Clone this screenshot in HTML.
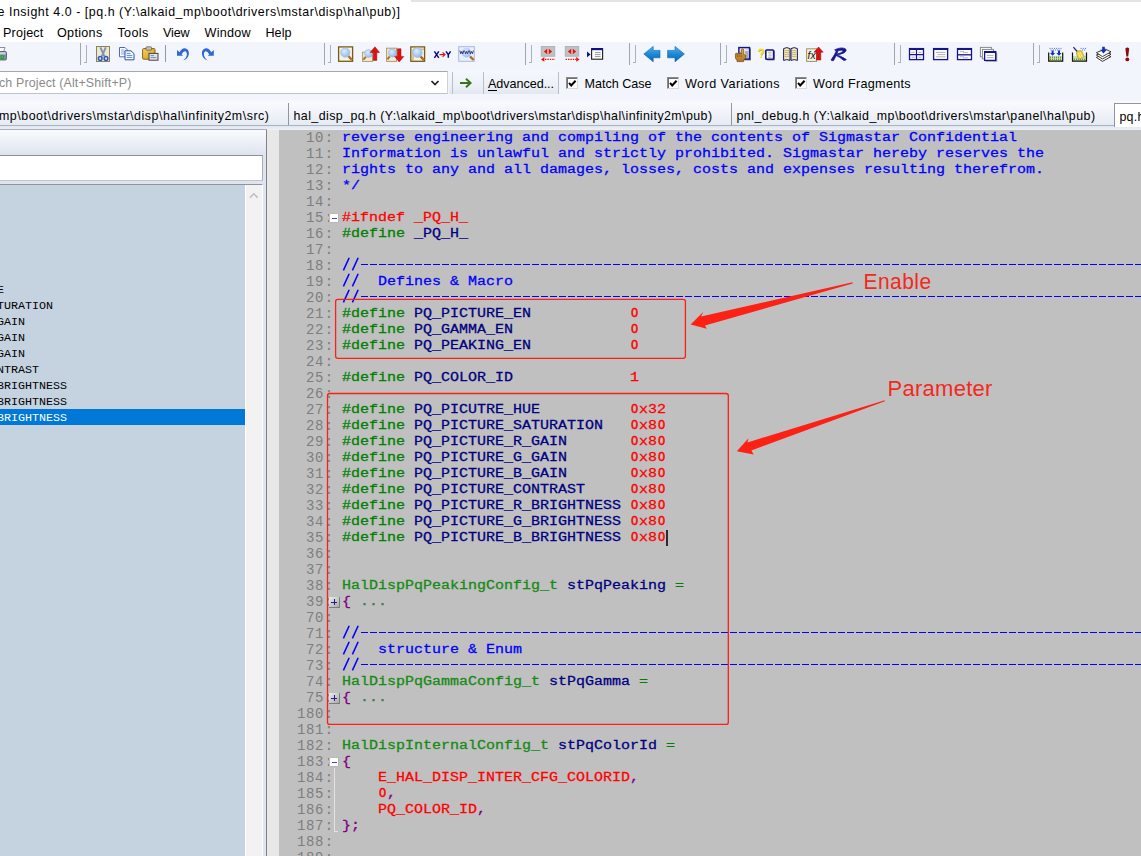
<!DOCTYPE html><html><head><meta charset="utf-8"><title>Source Insight</title><style>
*{box-sizing:border-box;margin:0;padding:0}
html,body{width:1141px;height:856px;overflow:hidden;background:#fff}
body{position:relative;font-family:"Liberation Sans",sans-serif;font-size:12px;color:#000}
.a{position:absolute}
.t{position:absolute;white-space:pre;line-height:16px;height:16px}
.ui{font-family:"Liberation Sans",sans-serif;font-size:12.4px;color:#000}
.code{position:absolute;left:343px;white-space:pre;font-family:"Liberation Mono",monospace;font-weight:normal;font-size:15px;line-height:16px;height:16px;-webkit-text-stroke:0.32px currentColor;transform:scaleY(.87);transform-origin:0 12px}
.ln{position:absolute;left:270px;width:63px;text-align:right;white-space:pre;font-family:"Liberation Mono",monospace;font-size:14px;letter-spacing:0.6px;line-height:16px;height:16px;color:#7e7e7e}
.z{display:inline-block;width:9px;text-align:center;transform:scaleX(.8);-webkit-text-stroke-width:0.6px}
.c{color:#0000ff}.r{color:#ff0000}.g{color:#008000}.n{color:#000080}.p{color:#800080}.ty{color:#158a15}.d{color:#3c7c3c}
.li{position:absolute;left:-94px;white-space:pre;font-family:"Liberation Mono",monospace;font-size:11.67px;line-height:16px;height:16px;color:#000}
.sep{position:absolute;width:1px;background:#a2a6ad}
.grip{position:absolute;width:3px;border:1px solid #aeb2b8;border-left:none;border-top:none}
.fold{position:absolute;width:10px;height:10px;background:#fff;border:1px solid #b8b8b8}
</style></head><body>
<div class="a" style="left:0;top:0;width:1141px;height:24px;background:#fff"></div>
<div class="a" style="left:411px;top:0;width:730px;height:2px;background:#e4e4e4"></div>
<div class="a" style="left:0;top:42px;width:1141px;height:58px;background:#f2f6fc"></div>
<div class="a" style="left:0;top:99px;width:1141px;height:5px;background:linear-gradient(#f1f5fb,#fbfcfe)"></div>
<svg class="a" style="left:0;top:42px" width="1141" height="28" viewBox="0 42 1141 28">
<defs>
<linearGradient id="gb" x1="0" y1="0" x2="0" y2="1"><stop offset="0" stop-color="#4db4f0"/><stop offset=".5" stop-color="#1c8ad6"/><stop offset="1" stop-color="#0b62ae"/></linearGradient>
<radialGradient id="gl" cx=".4" cy=".35" r=".7"><stop offset="0" stop-color="#dcecff"/><stop offset="1" stop-color="#8fb6ea"/></radialGradient>
<linearGradient id="gy" x1="0" y1="0" x2="1" y2="1"><stop offset="0" stop-color="#f6d060"/><stop offset="1" stop-color="#d89818"/></linearGradient>
</defs>
<!-- printer (partial) -->
<path d="M-2 47.5 L5 47.5 L3.5 52 L-2 52 Z" fill="#fff" stroke="#6a7280" stroke-width=".8"/>
<rect x="-3" y="51.5" width="9.5" height="8.5" rx="1.2" fill="#7f8fa6" stroke="#4a5668" stroke-width=".8"/>
<rect x="-2" y="52.2" width="7.6" height="2.2" fill="#c9d3e2"/>
<rect x="1" y="55.8" width="2.6" height="2.6" fill="#22d422" stroke="#0a7a0a" stroke-width=".5"/>
<!-- cut -->
<rect x="96.5" y="46.5" width="13" height="15" fill="#ece8d8" stroke="#8c8450" stroke-width="1"/>
<path d="M100.4 47.4 L104.4 56.4 M105.8 47.4 L101.8 56.4" stroke="#8391a9" stroke-width="1.9" fill="none"/>
<ellipse cx="100.2" cy="58.5" rx="1.8" ry="2" fill="none" stroke="#2f58c4" stroke-width="1.6"/>
<ellipse cx="106" cy="58.5" rx="1.8" ry="2" fill="none" stroke="#2f58c4" stroke-width="1.6"/>
<!-- copy -->
<path d="M119.5 47.5 H125 L127.5 50 V56.8 H119.5 Z" fill="#fff" stroke="#4a6cc0" stroke-width="1"/>
<path d="M121 50 H124.5 M121 52 H126 M121 54 H126" stroke="#6f96e0" stroke-width=".9"/>
<path d="M125 50.8 H131 L134 53.6 V59.8 H125 Z" fill="#fff" stroke="#2b4fa8" stroke-width="1"/>
<path d="M126.6 53.4 H130.5 M126.6 55.4 H132.4 M126.6 57.4 H132.4" stroke="#5b86dc" stroke-width="1"/>
<!-- paste -->
<rect x="142.6" y="48.6" width="12.4" height="10.6" rx="1" fill="url(#gy)" stroke="#8a6210" stroke-width="1"/>
<rect x="146" y="46.8" width="5.6" height="3.4" rx=".8" fill="#c9c2b0" stroke="#6c6250" stroke-width=".8"/>
<rect x="149" y="53.4" width="9" height="6.8" fill="#dbe5f2" stroke="#4a4238" stroke-width="1"/>
<path d="M150.6 55.6 H154 M150.6 57.6 H156.4" stroke="#6d7f9a" stroke-width=".9"/>
<!-- undo -->
<path id="undo" d="M177 50 V55.8 H183 L181.6 54.2 Q183.4 50.8 185.6 51.2 Q187.4 52.6 186.8 55.4 Q186 58.4 183.2 60.6 Q188 58.6 188.8 54.4 Q189.4 49.2 185 48.2 Q181.6 48 179.6 52.2 Z" fill="#2f68d4"/>
<!-- redo -->
<path transform="translate(390.8,0) scale(-1,1)" d="M177 50 V55.8 H183 L181.6 54.2 Q183.4 50.8 185.6 51.2 Q187.4 52.6 186.8 55.4 Q186 58.4 183.2 60.6 Q188 58.6 188.8 54.4 Q189.4 49.2 185 48.2 Q181.6 48 179.6 52.2 Z" fill="#2f68d4"/>
<!-- search 1 -->
<rect x="338.6" y="46.9" width="14" height="14.4" fill="#f6f2e4" stroke="#7a5a12" stroke-width="1.3"/>
<path d="M348.4 56.2 L352 60" stroke="#a8722a" stroke-width="2.4"/>
<circle cx="345.2" cy="52.6" r="4.6" fill="url(#gl)" stroke="#9cbcea" stroke-width=".7"/>
<!-- search up -->
<rect x="362.6" y="52.2" width="10" height="9.2" fill="#f1ecdc" stroke="#b39a5c" stroke-width="1"/>
<path d="M366 56.6 L363.4 59.6" stroke="#a8722a" stroke-width="2"/>
<circle cx="368.6" cy="53.6" r="4" fill="url(#gl)" stroke="#9cbcea" stroke-width=".6"/>
<path d="M374.9 46.8 L379.6 52.4 H376.8 V60.4 H373.2 V52.4 H370.2 Z" fill="#e01010" stroke="#a00808" stroke-width=".5"/>
<!-- search down -->
<rect x="386.6" y="48.2" width="10" height="13.2" fill="#f1ecdc" stroke="#b39a5c" stroke-width="1"/>
<path d="M389.8 56.4 L387.4 59.4" stroke="#a8722a" stroke-width="2"/>
<circle cx="392.4" cy="53" r="4" fill="url(#gl)" stroke="#9cbcea" stroke-width=".6"/>
<path d="M397.4 48.8 H401 V56.4 H403.8 L399.2 62 L394.6 56.4 H397.4 Z" fill="#e01010" stroke="#a00808" stroke-width=".5"/>
<!-- search files -->
<rect x="410.8" y="46.9" width="13.8" height="14.4" fill="#f6f2e4" stroke="#7a5a12" stroke-width="1.3"/>
<path d="M413 61 V49.2 H424.4" fill="none" stroke="#b39a5c" stroke-width="1"/>
<path d="M420.4 56.4 L424 60.2" stroke="#a8722a" stroke-width="2.4"/>
<circle cx="417.4" cy="52.6" r="4.8" fill="url(#gl)" stroke="#9cbcea" stroke-width=".7"/>
<!-- X->Y -->
<path d="M434.4 51.4 L438.8 57.8 M438.8 51.4 L434.4 57.8" stroke="#0a0a8a" stroke-width="1.5"/>
<path d="M439.4 54.6 H444.8 M442.6 52.4 L445 54.6 L442.6 56.8" stroke="#e01010" stroke-width="1.1" fill="none"/>
<path d="M446 51.4 L448.3 54.6 L450.6 51.4 M448.3 54.6 V57.8" stroke="#0a0a8a" stroke-width="1.5" fill="none"/>
<!-- www -->
<rect x="458.7" y="46.7" width="15.6" height="14.6" fill="#e9effc" stroke="#a9b8e4" stroke-width="1"/>
<circle cx="466.4" cy="52.6" r="4.8" fill="url(#gl)" opacity=".9"/>
<path d="M459.8 50.6 L460.8 53.8 L461.8 51.4 L462.8 53.8 L463.8 50.6 M464.6 50.6 L465.6 53.8 L466.6 51.4 L467.6 53.8 L468.6 50.6 M469.4 50.6 L470.4 53.8 L471.4 51.4 L472.4 53.8 L473.4 50.6" fill="none" stroke="#2a2a78" stroke-width=".9"/>
<path d="M470 56.4 L473.6 60" stroke="#a8722a" stroke-width="2.4"/>
<!-- red arrows 1 -->
<rect x="541.3" y="46.6" width="13.4" height="9.6" fill="#c2c2c2" stroke="#b0b0b0" stroke-width="1"/>
<path d="M547.2 48.8 V54.2 L543.8 51.5 Z M548.8 48.8 V54.2 L552.2 51.5 Z" fill="#e81010"/>
<path d="M541 59.4 L544.4 57 V61.8 Z" fill="#e81010"/><path d="M545 59.4 H555" stroke="#e81010" stroke-width="1.4" stroke-dasharray="1.4 1"/>
<!-- red arrows 2 -->
<rect x="565.3" y="46.6" width="13.4" height="9.6" fill="#c2c2c2" stroke="#b0b0b0" stroke-width="1"/>
<path d="M571.2 48.8 V54.2 L567.8 51.5 Z M572.8 48.8 V54.2 L576.2 51.5 Z" fill="#e81010"/>
<path d="M579.6 59.4 L576.2 57 V61.8 Z" fill="#e81010"/><path d="M565.6 59.4 H576" stroke="#e81010" stroke-width="1.4" stroke-dasharray="1.4 1"/>
<!-- window w/ arrow -->
<path d="M587 51.6 L590.6 54.4 L587 57.2 Z" fill="#10108a"/>
<rect x="591.6" y="48.6" width="11" height="10.6" fill="#fff" stroke="#1a1a2a" stroke-width="1.1"/>
<rect x="591.6" y="48.2" width="11" height="2" fill="#10108a"/>
<path d="M595 52.6 H600.6 M595 54.6 H600.6 M595 56.6 H600.6" stroke="#8a8a8a" stroke-width=".9"/>
<!-- nav arrows -->
<path d="M643.8 54 L653.2 46.4 V50.4 H660 V57.8 H653.2 V61.8 Z" fill="url(#gb)" stroke="#0c62b0" stroke-width=".6"/>
<path d="M684.4 54 L675 46.4 V50.4 H667.6 V57.8 H675 V61.8 Z" fill="url(#gb)" stroke="#0c62b0" stroke-width=".6"/>
<!-- hand doc -->
<rect x="740" y="48.4" width="11" height="12" fill="#7e7e86"/>
<rect x="738.9" y="47.6" width="10.6" height="11.4" fill="#fff" stroke="#14148c" stroke-width="1.5"/>
<rect x="745" y="51" width="3.4" height="7.2" fill="#a9adb6"/>
<path d="M745.4 49.8 H748" stroke="#b0b0b0" stroke-width=".8"/>
<linearGradient id="gh" x1="0" y1="0" x2="0" y2="1"><stop offset="0" stop-color="#e0aa5c"/><stop offset="1" stop-color="#b2741e"/></linearGradient>
<path d="M735.4 54.4 Q735.4 53.2 736.3 53.2 Q737.2 53.2 737.2 54.4 Q737.2 53 738.2 53 Q739.1 53 739.1 54.2 Q739.1 52.8 740.2 52.8 Q741.2 52.8 741.2 54 V50 Q741.2 49 742.5 49 Q743.8 49 743.8 50 V55 Q744.8 54.2 745.6 55.4 V57.6 Q745 59.4 743.6 60.2 V61.6 H737 V60.4 Q735.4 59 735.4 57 Z" fill="url(#gh)" stroke="#6e4408" stroke-width=".7"/>
<path d="M737.2 54.4 V57 M739.1 54.2 V57 M741.2 54 V57" stroke="#6e4408" stroke-width=".6"/>
<!-- ? doc -->
<path d="M759.4 51.9 Q759.4 49.9 761.5 49.9 Q763.7 49.9 763.7 51.8 Q763.7 53 761.7 54.2 V55.6" fill="none" stroke="#9a9aa8" stroke-width="1.6"/>
<path d="M758.9 51.4 Q758.9 49.4 761 49.4 Q763.2 49.4 763.2 51.3 Q763.2 52.5 761.2 53.7 V55.1" fill="none" stroke="#f4e400" stroke-width="1.8"/><circle cx="761.2" cy="57.3" r="1.05" fill="#f4e400"/>
<rect x="766.6" y="50.6" width="8.4" height="10" rx="1" fill="#8a8a90"/>
<rect x="765.8" y="50" width="7.8" height="9.2" rx=".8" fill="#fff" stroke="#14148c" stroke-width="1.6"/>
<path d="M767.8 52.2 H771.6 M768.4 54 H771.6 M768.4 55.8 H771.6 M767.8 57.4 H771.6" stroke="#a0a0a0" stroke-width=".8"/>
<!-- book -->
<path d="M783.6 48.6 Q786.8 46.6 790 48.6 V60.4 Q786.8 58.8 783.6 60.4 Z" fill="#f3ebb8" stroke="#1a1a6a" stroke-width="1"/>
<path d="M791 48.6 Q794.2 46.6 797.4 48.6 V60.4 Q794.2 58.8 791 60.4 Z" fill="#f3ebb8" stroke="#1a1a6a" stroke-width="1"/>
<path d="M784.6 50.6 H789 M784.6 52.6 H789 M784.6 54.6 H789 M784.6 56.6 H789 M792 50.6 H796.4 M792 52.6 H796.4 M792 54.6 H796.4 M792 56.6 H796.4" stroke="#b8a868" stroke-width=".8"/>
<!-- fx up -->
<rect x="806.6" y="48.8" width="10" height="12.6" fill="#f6f2e2" stroke="#a8905a" stroke-width="1"/>
<path d="M818.6 47 L823.2 52.2 H820.8 V60 H816.6 V52.2 H814 Z" fill="#d81010" stroke="#980808" stroke-width=".5"/>
<text x="807.6" y="59" font-family="Liberation Sans" font-style="italic" font-size="10.5" fill="#111" textLength="8" lengthAdjust="spacingAndGlyphs">fx</text>
<!-- R -->
<path d="M834.6 49.8 Q841.4 46.6 845.4 48.8 Q847.6 51 843.4 53.2 Q839 55 835.6 54.8 Q840 55.2 846.4 59.6 Q845 60.8 843.4 60.2 Q839.6 57 836.2 55.6 L833.6 60.6 Q831.8 61 831 60 Q834.6 55 836.4 50.8 Q835 50.8 834.6 49.8 Z M838.4 50.6 L836.6 54 Q840.6 53.4 843.4 51.2 Q842.4 49.6 838.4 50.6 Z" fill="#15158e" fill-rule="evenodd" stroke="#15158e" stroke-width=".7"/>
<!-- grid -->
<rect x="909.5" y="48.6" width="14" height="11" fill="#fff" stroke="#14148c" stroke-width="1.3"/>
<rect x="909" y="48" width="15" height="2" fill="#14148c"/>
<path d="M916.5 49 V59.6 M909.5 54.6 H923.5" stroke="#14148c" stroke-width="1.2"/>
<path d="M911.4 52.4 H914.6 M918.4 52.4 H921.6 M911.4 57.2 H914.6 M918.4 57.2 H921.6" stroke="#a8a8a8" stroke-width=".9"/>
<!-- window -->
<rect x="933.6" y="48.6" width="14" height="11" fill="#fff" stroke="#14148c" stroke-width="1.3"/>
<rect x="933" y="48" width="15.2" height="2" fill="#14148c"/>
<path d="M936 52.4 H945.4 M937.6 54.6 H945.4 M936 56.8 H945.4" stroke="#a8a8a8" stroke-width=".9"/>
<!-- split -->
<rect x="957.5" y="48.6" width="14" height="11" fill="#fff" stroke="#14148c" stroke-width="1.3"/>
<rect x="957" y="48" width="15" height="2" fill="#14148c"/>
<path d="M957.5 54.8 H971.5" stroke="#14148c" stroke-width="1.3"/>
<path d="M960 51.6 H964 M963 52.6 H968 M960 56.8 H964 M963 57.8 H968" stroke="#a8a8a8" stroke-width=".8"/>
<!-- cascade -->
<rect x="980.4" y="47.4" width="11" height="9.4" fill="#fff" stroke="#8a8a8a" stroke-width="1"/>
<rect x="982.4" y="49.4" width="11" height="9.4" fill="#fff" stroke="#8a8a8a" stroke-width="1"/>
<rect x="985.6" y="52.6" width="11.6" height="9" fill="#8a8a8a"/>
<rect x="984.6" y="51.6" width="11" height="8.8" fill="#fff" stroke="#14148c" stroke-width="1.3"/>
<rect x="984" y="51" width="12.2" height="2" fill="#14148c"/>
<path d="M986.8 55.4 H993.6 M986.8 57.6 H993.6" stroke="#a8a8a8" stroke-width=".9"/>
<!-- build -->
<rect x="1048.8" y="56" width="13.8" height="5" fill="#c4e4a4"/>
<path d="M1048.7 52.4 V61.2 H1062.7 V52.4" fill="none" stroke="#111" stroke-width="1.2"/>
<path d="M1050 57.2 H1062 M1050 59.2 H1062" stroke="#2a4a2a" stroke-width=".9" stroke-dasharray=".9 1.1"/>
<path d="M1049.6 48.4 H1062 M1050.6 50 H1061" stroke="#2050d8" stroke-width=".9" stroke-dasharray=".9 1.3"/>
<path d="M1051.6 50.4 H1053.6 V53 H1055.2 L1052.6 55.8 L1050 53 H1051.6 Z M1058 50.4 H1060 V53 H1061.6 L1059 55.8 L1056.4 53 H1058 Z" fill="#1030c0"/>
<!-- clean -->
<rect x="1072.6" y="56" width="13.8" height="5" fill="#c4e4a4"/>
<path d="M1072.5 52.4 V61.2 H1086.5 V52.4" fill="none" stroke="#111" stroke-width="1.2"/>
<path d="M1074 59.2 H1086" stroke="#2a4a2a" stroke-width=".9" stroke-dasharray=".9 1.1"/>
<path d="M1080.6 48.4 H1086.6 M1082 50 H1086" stroke="#2050d8" stroke-width=".9" stroke-dasharray=".9 1.3"/>
<path d="M1073.4 47.2 L1077.6 52" stroke="#1a1a90" stroke-width="1.2"/>
<path d="M1077 51 L1081.4 50.6 L1084.4 56.6 L1078.6 59.6 L1076.4 53.6 Z" fill="#ecd040" stroke="#a88c10" stroke-width=".6"/>
<path d="M1078.4 53 L1080.6 58.2 M1080 52.2 L1082.4 57.4" stroke="#fff8c0" stroke-width=".7"/>
<!-- layers -->
<path d="M1096.4 57.4 L1105 53.8 L1111 56.6 L1102.4 61.4 Z" fill="#fff" stroke="#222" stroke-width=".9"/>
<path d="M1096.4 55 L1105 51.4 L1111 54.2 L1102.4 59 Z" fill="#fff" stroke="#222" stroke-width=".9"/>
<path d="M1096.4 52.6 L1105 49 L1111 51.8 L1102.4 56.6 Z" fill="#fff" stroke="#222" stroke-width=".9"/>
<path d="M1102.2 46.8 H1104.8 V49.8 H1106.8 L1103.5 53.4 L1100.2 49.8 H1102.2 Z" fill="#1030c0"/>
<!-- bang -->
<path d="M1125.4 48.6 Q1127.3 46.2 1129.2 48.6 L1128.2 56.4 H1126.4 Z" fill="#8c0a0a"/><circle cx="1127.3" cy="59.4" r="1.9" fill="#8c0a0a"/>
</svg>

<div class="sep" style="left:80px;top:43px;height:22px"></div>
<div class="grip" style="left:84px;top:45px;height:18px"></div>
<div class="sep" style="left:324px;top:43px;height:22px"></div>
<div class="grip" style="left:328px;top:45px;height:18px"></div>
<div class="sep" style="left:525px;top:43px;height:22px"></div>
<div class="grip" style="left:529px;top:45px;height:18px"></div>
<div class="sep" style="left:629px;top:43px;height:22px"></div>
<div class="grip" style="left:633px;top:45px;height:18px"></div>
<div class="sep" style="left:720px;top:43px;height:22px"></div>
<div class="grip" style="left:724px;top:45px;height:18px"></div>
<div class="sep" style="left:894px;top:43px;height:22px"></div>
<div class="grip" style="left:898px;top:45px;height:18px"></div>
<div class="sep" style="left:1033px;top:43px;height:22px"></div>
<div class="grip" style="left:1037px;top:45px;height:18px"></div>
<div class="sep" style="left:165px;top:45px;height:17px;background:#8f97a3"></div>
<div class="a" style="left:449px;top:71px;width:109px;height:23px;background:linear-gradient(#f4f7fc,#eef2f8 55%,#e3e8f0)"></div>
<div class="a" style="left:-2px;top:71px;width:450px;height:23px;background:#fff;border:1px solid #a3a8b0;border-right-color:#cfd3d9;border-bottom-color:#bfc3ca"></div>
<svg class="a" style="left:430px;top:79px" width="10" height="8" viewBox="0 0 10 8"><path d="M1.5 2 L5 5.6 L8.5 2" fill="none" stroke="#222" stroke-width="1.7"/></svg>
<div class="sep" style="left:452px;top:72px;height:22px;background:#b9bfc9"></div>
<svg class="a" style="left:459px;top:76px" width="14" height="14" viewBox="0 0 14 14"><path d="M1 7 H11 M7 2.8 L11.6 7 L7 11.2" fill="none" stroke="#3a731c" stroke-width="1.9"/></svg>
<div class="sep" style="left:483px;top:72px;height:22px;background:#b9bfc9"></div>
<div class="a" style="left:488px;top:90px;width:9px;height:1px;background:#000"></div>
<div class="sep" style="left:558px;top:72px;height:22px;background:#b9bfc9"></div>
<div class="a" style="left:566px;top:77px;width:12px;height:12px;background:#fff;border:1px solid #8a8a8a;border-right-color:#dadada;border-bottom-color:#dadada;box-shadow:inset 1px 1px 0 #6e6e6e"></div>
<svg class="a" style="left:566px;top:77px" width="12" height="12" viewBox="0 0 12 12"><path d="M3 5.9 L5.2 8.5 L9.6 3.7" fill="none" stroke="#000" stroke-width="2"/></svg>
<div class="a" style="left:667px;top:77px;width:12px;height:12px;background:#fff;border:1px solid #8a8a8a;border-right-color:#dadada;border-bottom-color:#dadada;box-shadow:inset 1px 1px 0 #6e6e6e"></div>
<svg class="a" style="left:667px;top:77px" width="12" height="12" viewBox="0 0 12 12"><path d="M3 5.9 L5.2 8.5 L9.6 3.7" fill="none" stroke="#000" stroke-width="2"/></svg>
<div class="a" style="left:795px;top:77px;width:12px;height:12px;background:#fff;border:1px solid #8a8a8a;border-right-color:#dadada;border-bottom-color:#dadada;box-shadow:inset 1px 1px 0 #6e6e6e"></div>
<svg class="a" style="left:795px;top:77px" width="12" height="12" viewBox="0 0 12 12"><path d="M3 5.9 L5.2 8.5 L9.6 3.7" fill="none" stroke="#000" stroke-width="2"/></svg>
<div class="a" style="left:0;top:104px;width:1141px;height:21px;background:linear-gradient(#f7f9fc,#e6ebf3)"></div>
<div class="a" style="left:0;top:125px;width:1141px;height:1px;background:#aab3c0"></div>
<div class="a" style="left:0;top:126px;width:1141px;height:4px;background:linear-gradient(#dfe6ef,#eef2f8)"></div>
<div class="sep" style="left:288px;top:103px;height:22px;background:#8f96a1"></div>
<div class="sep" style="left:731px;top:103px;height:22px;background:#8f96a1"></div>
<div class="a" style="left:1114px;top:103px;width:40px;height:24px;background:#fff;border:1px solid #8f96a1;border-bottom:none"></div>
<div class="a" style="left:0;top:129px;width:267px;height:1px;background:#a9b0bb"></div>
<div class="a" style="left:0;top:130px;width:266px;height:726px;background:#dee5ef"></div>
<div class="a" style="left:0;top:130px;width:266px;height:25px;background:linear-gradient(#f9fbfe,#dee4ee)"></div>
<div class="a" style="left:266px;top:130px;width:1px;height:726px;background:#808386"></div>
<div class="a" style="left:267px;top:130px;width:12px;height:726px;background:#e8e8e8"></div>
<div class="a" style="left:-2px;top:155px;width:265px;height:26px;background:#fff;border:1px solid #a9aeb6;border-top-color:#8e9095;border-bottom-color:#c2c5ca"></div>
<div class="a" style="left:-2px;top:184px;width:265px;height:680px;background:#c5d3e0;border:1px solid #a9aeb6;border-top-color:#90949a;border-right-color:#fff"></div>
<div class="a" style="left:245px;top:185px;width:17px;height:680px;background:#f2f2f2;border-left:1px solid #fff"></div>
<svg class="a" style="left:248px;top:191px" width="12" height="8" viewBox="0 0 12 8"><path d="M2 6.6 L5.8 2.8 L9.6 6.6" fill="none" stroke="#bdbdbd" stroke-width="1.5"/></svg>
<div class="a" style="left:0;top:409px;width:245px;height:16px;background:#0078d7"></div>
<div class="li" style="top:282px;color:#000">PQ_PICUTRE_HUE</div>
<div class="li" style="top:298px;color:#000">PQ_PICTURE_SATURATION</div>
<div class="li" style="top:314px;color:#000">PQ_PICTURE_R_GAIN</div>
<div class="li" style="top:330px;color:#000">PQ_PICTURE_G_GAIN</div>
<div class="li" style="top:346px;color:#000">PQ_PICTURE_B_GAIN</div>
<div class="li" style="top:362px;color:#000">PQ_PICTURE_CONTRAST</div>
<div class="li" style="top:378px;color:#000">PQ_PICTURE_R_BRIGHTNESS</div>
<div class="li" style="top:394px;color:#000">PQ_PICTURE_G_BRIGHTNESS</div>
<div class="li" style="top:410px;color:#fff">PQ_PICTURE_B_BRIGHTNESS</div>
<div class="a" style="left:279px;top:130px;width:862px;height:726px;background:#c0c0c0"></div>
<div class="a" style="left:279px;top:130px;width:862px;height:726px;overflow:hidden">
<div class="ln" style="left:-9px;top:0px">10<span style="position:relative;left:0.8px">:</span></div>
<div class="code" style="left:63px;top:0px"><span class="c">reverse engineering and compiling of the contents of Sigmastar Confidential</span></div>
<div class="ln" style="left:-9px;top:16px">11<span style="position:relative;left:0.8px">:</span></div>
<div class="code" style="left:63px;top:16px"><span class="c">Information is unlawful and strictly prohibited. Sigmastar hereby reserves the</span></div>
<div class="ln" style="left:-9px;top:32px">12<span style="position:relative;left:0.8px">:</span></div>
<div class="code" style="left:63px;top:32px"><span class="c">rights to any and all damages, losses, costs and expenses resulting therefrom.</span></div>
<div class="ln" style="left:-9px;top:48px">13<span style="position:relative;left:0.8px">:</span></div>
<div class="code" style="left:63px;top:48px"><span class="c">*/</span></div>
<div class="ln" style="left:-9px;top:64px">14<span style="position:relative;left:0.8px">:</span></div>
<div class="ln" style="left:-9px;top:80px">15<span style="position:relative;left:0.8px">:</span></div>
<div class="code" style="left:63px;top:80px"><span class="r">#ifndef _PQ_H_</span></div>
<div class="ln" style="left:-9px;top:96px">16<span style="position:relative;left:0.8px">:</span></div>
<div class="code" style="left:63px;top:96px"><span class="g">#define </span><span class="n">_PQ_H_</span></div>
<div class="ln" style="left:-9px;top:112px">17<span style="position:relative;left:0.8px">:</span></div>
<div class="ln" style="left:-9px;top:128px">18<span style="position:relative;left:0.8px">:</span></div>
<svg class="a" style="left:63px;top:123.4px" width="20" height="20" viewBox="0 0 20 20"><path d="M1.4 17.4 L7.2 4.8 M10.4 17.4 L16.2 4.8" stroke="#0000ff" stroke-width="1.55" fill="none"/></svg>
<div class="a" style="left:82.1px;top:133.6px;width:790px;height:1.4px;background:repeating-linear-gradient(90deg,#0000ff 0,#0000ff 6.9px,transparent 6.9px,transparent 9px)"></div>
<div class="ln" style="left:-9px;top:144px">19<span style="position:relative;left:0.8px">:</span></div>
<svg class="a" style="left:63px;top:139.4px" width="20" height="20" viewBox="0 0 20 20"><path d="M1.4 17.4 L7.2 4.8 M10.4 17.4 L16.2 4.8" stroke="#0000ff" stroke-width="1.55" fill="none"/></svg>
<div class="code" style="left:63px;top:144px"><span class="c">    Defines &amp; Macro</span></div>
<div class="ln" style="left:-9px;top:160px">20<span style="position:relative;left:0.8px">:</span></div>
<svg class="a" style="left:63px;top:155.4px" width="20" height="20" viewBox="0 0 20 20"><path d="M1.4 17.4 L7.2 4.8 M10.4 17.4 L16.2 4.8" stroke="#0000ff" stroke-width="1.55" fill="none"/></svg>
<div class="a" style="left:82.1px;top:165.6px;width:790px;height:1.4px;background:repeating-linear-gradient(90deg,#0000ff 0,#0000ff 6.9px,transparent 6.9px,transparent 9px)"></div>
<div class="ln" style="left:-9px;top:176px">21<span style="position:relative;left:0.8px">:</span></div>
<div class="code" style="left:63px;top:176px"><span class="g">#define </span><span class="n">PQ_PICTURE_EN           </span><span class="r"><span class="z">O</span></span></div>
<div class="ln" style="left:-9px;top:192px">22<span style="position:relative;left:0.8px">:</span></div>
<div class="code" style="left:63px;top:192px"><span class="g">#define </span><span class="n">PQ_GAMMA_EN             </span><span class="r"><span class="z">O</span></span></div>
<div class="ln" style="left:-9px;top:208px">23<span style="position:relative;left:0.8px">:</span></div>
<div class="code" style="left:63px;top:208px"><span class="g">#define </span><span class="n">PQ_PEAKING_EN           </span><span class="r"><span class="z">O</span></span></div>
<div class="ln" style="left:-9px;top:224px">24<span style="position:relative;left:0.8px">:</span></div>
<div class="ln" style="left:-9px;top:240px">25<span style="position:relative;left:0.8px">:</span></div>
<div class="code" style="left:63px;top:240px"><span class="g">#define </span><span class="n">PQ_COLOR_ID             </span><span class="r">1</span></div>
<div class="ln" style="left:-9px;top:256px">26<span style="position:relative;left:0.8px">:</span></div>
<div class="ln" style="left:-9px;top:272px">27<span style="position:relative;left:0.8px">:</span></div>
<div class="code" style="left:63px;top:272px"><span class="g">#define </span><span class="n">PQ_PICUTRE_HUE          </span><span class="r"><span class="z">O</span>x32</span></div>
<div class="ln" style="left:-9px;top:288px">28<span style="position:relative;left:0.8px">:</span></div>
<div class="code" style="left:63px;top:288px"><span class="g">#define </span><span class="n">PQ_PICTURE_SATURATION   </span><span class="r"><span class="z">O</span>x8<span class="z">O</span></span></div>
<div class="ln" style="left:-9px;top:304px">29<span style="position:relative;left:0.8px">:</span></div>
<div class="code" style="left:63px;top:304px"><span class="g">#define </span><span class="n">PQ_PICTURE_R_GAIN       </span><span class="r"><span class="z">O</span>x8<span class="z">O</span></span></div>
<div class="ln" style="left:-9px;top:320px">30<span style="position:relative;left:0.8px">:</span></div>
<div class="code" style="left:63px;top:320px"><span class="g">#define </span><span class="n">PQ_PICTURE_G_GAIN       </span><span class="r"><span class="z">O</span>x8<span class="z">O</span></span></div>
<div class="ln" style="left:-9px;top:336px">31<span style="position:relative;left:0.8px">:</span></div>
<div class="code" style="left:63px;top:336px"><span class="g">#define </span><span class="n">PQ_PICTURE_B_GAIN       </span><span class="r"><span class="z">O</span>x8<span class="z">O</span></span></div>
<div class="ln" style="left:-9px;top:352px">32<span style="position:relative;left:0.8px">:</span></div>
<div class="code" style="left:63px;top:352px"><span class="g">#define </span><span class="n">PQ_PICTURE_CONTRAST     </span><span class="r"><span class="z">O</span>x8<span class="z">O</span></span></div>
<div class="ln" style="left:-9px;top:368px">33<span style="position:relative;left:0.8px">:</span></div>
<div class="code" style="left:63px;top:368px"><span class="g">#define </span><span class="n">PQ_PICTURE_R_BRIGHTNESS </span><span class="r"><span class="z">O</span>x8<span class="z">O</span></span></div>
<div class="ln" style="left:-9px;top:384px">34<span style="position:relative;left:0.8px">:</span></div>
<div class="code" style="left:63px;top:384px"><span class="g">#define </span><span class="n">PQ_PICTURE_G_BRIGHTNESS </span><span class="r"><span class="z">O</span>x8<span class="z">O</span></span></div>
<div class="ln" style="left:-9px;top:400px">35<span style="position:relative;left:0.8px">:</span></div>
<div class="code" style="left:63px;top:400px"><span class="g">#define </span><span class="n">PQ_PICTURE_B_BRIGHTNESS </span><span class="r"><span class="z">O</span>x8<span class="z">O</span></span></div>
<div class="ln" style="left:-9px;top:416px">36<span style="position:relative;left:0.8px">:</span></div>
<div class="ln" style="left:-9px;top:432px">37<span style="position:relative;left:0.8px">:</span></div>
<div class="ln" style="left:-9px;top:448px">38<span style="position:relative;left:0.8px">:</span></div>
<div class="code" style="left:63px;top:448px"><span class="ty">HalDispPqPeakingConfig_t </span><span class="n">stPqPeaking </span><span class="g">=</span></div>
<div class="ln" style="left:-9px;top:464px">39<span style="position:relative;left:0.8px">:</span></div>
<div class="code" style="left:63px;top:464px"><span class="p">{ </span><span class="d">...</span></div>
<div class="ln" style="left:-9px;top:480px">70<span style="position:relative;left:0.8px">:</span></div>
<div class="ln" style="left:-9px;top:496px">71<span style="position:relative;left:0.8px">:</span></div>
<svg class="a" style="left:63px;top:491.4px" width="20" height="20" viewBox="0 0 20 20"><path d="M1.4 17.4 L7.2 4.8 M10.4 17.4 L16.2 4.8" stroke="#0000ff" stroke-width="1.55" fill="none"/></svg>
<div class="a" style="left:82.1px;top:501.6px;width:790px;height:1.4px;background:repeating-linear-gradient(90deg,#0000ff 0,#0000ff 6.9px,transparent 6.9px,transparent 9px)"></div>
<div class="ln" style="left:-9px;top:512px">72<span style="position:relative;left:0.8px">:</span></div>
<svg class="a" style="left:63px;top:507.4px" width="20" height="20" viewBox="0 0 20 20"><path d="M1.4 17.4 L7.2 4.8 M10.4 17.4 L16.2 4.8" stroke="#0000ff" stroke-width="1.55" fill="none"/></svg>
<div class="code" style="left:63px;top:512px"><span class="c">    structure &amp; Enum</span></div>
<div class="ln" style="left:-9px;top:528px">73<span style="position:relative;left:0.8px">:</span></div>
<svg class="a" style="left:63px;top:523.4px" width="20" height="20" viewBox="0 0 20 20"><path d="M1.4 17.4 L7.2 4.8 M10.4 17.4 L16.2 4.8" stroke="#0000ff" stroke-width="1.55" fill="none"/></svg>
<div class="a" style="left:82.1px;top:533.6px;width:790px;height:1.4px;background:repeating-linear-gradient(90deg,#0000ff 0,#0000ff 6.9px,transparent 6.9px,transparent 9px)"></div>
<div class="ln" style="left:-9px;top:544px">74<span style="position:relative;left:0.8px">:</span></div>
<div class="code" style="left:63px;top:544px"><span class="ty">HalDispPqGammaConfig_t </span><span class="n">stPqGamma </span><span class="g">=</span></div>
<div class="ln" style="left:-9px;top:560px">75<span style="position:relative;left:0.8px">:</span></div>
<div class="code" style="left:63px;top:560px"><span class="p">{ </span><span class="d">...</span></div>
<div class="ln" style="left:-9px;top:576px">180<span style="position:relative;left:0.8px">:</span></div>
<div class="ln" style="left:-9px;top:592px">181<span style="position:relative;left:0.8px">:</span></div>
<div class="ln" style="left:-9px;top:608px">182<span style="position:relative;left:0.8px">:</span></div>
<div class="code" style="left:63px;top:608px"><span class="ty">HalDispInternalConfig_t </span><span class="n">stPqColorId </span><span class="g">=</span></div>
<div class="ln" style="left:-9px;top:624px">183<span style="position:relative;left:0.8px">:</span></div>
<div class="code" style="left:63px;top:624px"><span class="p">{</span></div>
<div class="ln" style="left:-9px;top:640px">184<span style="position:relative;left:0.8px">:</span></div>
<div class="code" style="left:63px;top:640px"><span class="r">    E_HAL_DISP_INTER_CFG_COLORID</span><span class="p">,</span></div>
<div class="ln" style="left:-9px;top:656px">185<span style="position:relative;left:0.8px">:</span></div>
<div class="code" style="left:63px;top:656px"><span class="r">    <span class="z">O</span></span><span class="p">,</span></div>
<div class="ln" style="left:-9px;top:672px">186<span style="position:relative;left:0.8px">:</span></div>
<div class="code" style="left:63px;top:672px"><span class="r">    PQ_COLOR_ID</span><span class="p">,</span></div>
<div class="ln" style="left:-9px;top:688px">187<span style="position:relative;left:0.8px">:</span></div>
<div class="code" style="left:63px;top:688px"><span class="p">};</span></div>
<div class="ln" style="left:-9px;top:704px">188<span style="position:relative;left:0.8px">:</span></div>
<div class="ln" style="left:-9px;top:720px">189<span style="position:relative;left:0.8px">:</span></div>
</div>
<div class="fold" style="left:329.3px;top:213.3px;width:10.2px;height:10.2px"></div><div class="a" style="left:332.2px;top:217.60000000000002px;width:4.6px;height:1.6px;background:#3a4fa8"></div>
<div class="a" style="left:329.2px;top:597.3px;width:10.8px;height:10.6px;background:linear-gradient(135deg,#ececec,#c6c6c6 60%,#a8a8a8);border-right:1px solid #7c7c7c;border-bottom:1px solid #7c7c7c"></div><div class="a" style="left:331.2px;top:601.5px;width:6px;height:1.5px;background:#1c1c8c"></div><div class="a" style="left:333.5px;top:599.1999999999999px;width:1.5px;height:6px;background:#1c1c8c"></div>
<div class="a" style="left:329.2px;top:693.3px;width:10.8px;height:10.6px;background:linear-gradient(135deg,#ececec,#c6c6c6 60%,#a8a8a8);border-right:1px solid #7c7c7c;border-bottom:1px solid #7c7c7c"></div><div class="a" style="left:331.2px;top:697.5px;width:6px;height:1.5px;background:#1c1c8c"></div><div class="a" style="left:333.5px;top:695.1999999999999px;width:1.5px;height:6px;background:#1c1c8c"></div>
<div class="fold" style="left:329.3px;top:757.3px;width:10.2px;height:10.2px"></div><div class="a" style="left:332.2px;top:761.5999999999999px;width:4.6px;height:1.6px;background:#3a4fa8"></div>
<div class="a" style="left:334px;top:768px;width:1px;height:63px;background:#e4e4e4"></div><div class="a" style="left:334px;top:831px;width:4px;height:1px;background:#e4e4e4"></div>
<div class="a" style="left:666.4px;top:530px;width:1.9px;height:16px;background:#2c2c2c"></div>
<svg class="a" style="left:0;top:0" width="1141" height="856" viewBox="0 0 1141 856">
<rect x="335.6" y="299.4" width="349.8" height="58.9" rx="2.2" fill="none" stroke="#fb2016" stroke-width="1.3"/>
<rect x="327.5" y="393.5" width="400.8" height="330.9" rx="2.2" fill="none" stroke="#fb2016" stroke-width="1.3"/>
<path d="M852.6 282.3 L701.1 316.4 L703.4 311.8 L690.6 324.5 L706.7 328.7 L705 325.5 L852.6 283.6 Z" fill="#fd2015"/>
<path d="M884.8 400.2 L747.4 442.4 L748.5 438.3 L736.8 451.3 L753.7 454.4 L751.4 450.5 L884.8 401.2 Z" fill="#fd2015"/>
</svg>
<div class="t" style="left:863.5px;top:269.5px;font-size:21px;line-height:24px;height:24px;color:#f6271b;letter-spacing:0.45px;transform:scaleY(1.07);transform-origin:0 19px">Enable</div>
<div class="t" style="left:887.6px;top:377px;font-size:22px;line-height:24px;height:24px;color:#f6271b;letter-spacing:0.25px">Parameter</div>
<div id="title" class="t ui" style="left:-2.5px;top:4px;font-size:12.4px;letter-spacing:0.55px;color:#000">e Insight 4.0 - [pq.h (Y:\alkaid_mp\boot\drivers\mstar\disp\hal\pub)]</div>
<div id="m0" class="t ui" style="left:3px;top:25px;font-size:12.6px;letter-spacing:0.185px;color:#000">Project</div>
<div id="m1" class="t ui" style="left:57px;top:25px;font-size:12.6px;letter-spacing:0.299px;color:#000">Options</div>
<div id="m2" class="t ui" style="left:117.5px;top:25px;font-size:12.6px;letter-spacing:0.319px;color:#000">Tools</div>
<div id="m3" class="t ui" style="left:163px;top:25px;font-size:12.6px;letter-spacing:-0.145px;color:#000">View</div>
<div id="m4" class="t ui" style="left:204.5px;top:25px;font-size:12.6px;letter-spacing:0.284px;color:#000">Window</div>
<div id="m5" class="t ui" style="left:265.5px;top:25px;font-size:12.6px;letter-spacing:0.023px;color:#000">Help</div>
<div id="srch" class="t ui" style="left:-1px;top:75px;font-size:12.4px;letter-spacing:0.155px;color:#8a8a8a">ch Project (Alt+Shift+P)</div>
<div id="adv" class="t ui" style="left:488px;top:76px;font-size:12.6px;letter-spacing:-0.047px;color:#000">Advanced...</div>
<div id="mc" class="t ui" style="left:584.5px;top:76px;font-size:12.6px;letter-spacing:-0.02px;color:#000">Match Case</div>
<div id="wv" class="t ui" style="left:685px;top:76px;font-size:12.6px;letter-spacing:0.438px;color:#000">Word Variations</div>
<div id="wf" class="t ui" style="left:813px;top:76px;font-size:12.6px;letter-spacing:0.317px;color:#000">Word Fragments</div>
<div id="tab0" class="t ui" style="left:-1px;top:108px;font-size:12.4px;letter-spacing:0.536px;color:#000">mp\boot\drivers\mstar\disp\hal\infinity2m\src)</div>
<div id="tab1" class="t ui" style="left:293.5px;top:108px;font-size:12.4px;letter-spacing:0.43px;color:#000">hal_disp_pq.h (Y:\alkaid_mp\boot\drivers\mstar\disp\hal\infinity2m\pub)</div>
<div id="tab2" class="t ui" style="left:736.5px;top:108px;font-size:12.4px;letter-spacing:0.469px;color:#000">pnl_debug.h (Y:\alkaid_mp\boot\drivers\mstar\panel\hal\pub)</div>
<div id="tab3" class="t ui" style="left:1119.5px;top:109px;font-size:12.4px;letter-spacing:0.219px;color:#000">pq.h</div>
</body></html>
